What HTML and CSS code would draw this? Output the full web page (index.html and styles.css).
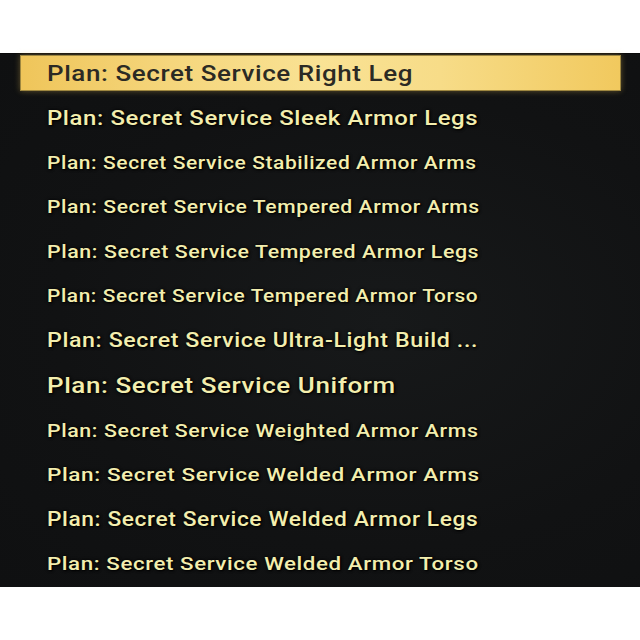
FILE: index.html
```html
<!DOCTYPE html>
<html>
<head>
<meta charset="utf-8">
<link rel="stylesheet" href="styles.css">
</head>
<body>
<div class="panel">
  <ul class="list">
    <li class="row selected fs-220"><span class="label">Plan: Secret Service Right Leg</span></li>
    <li class="row fs-203"><span class="label">Plan: Secret Service Sleek Armor Legs</span></li>
    <li class="row fs-178"><span class="label">Plan: Secret Service Stabilized Armor Arms</span></li>
    <li class="row fs-179"><span class="label">Plan: Secret Service Tempered Armor Arms</span></li>
    <li class="row fs-181"><span class="label">Plan: Secret Service Tempered Armor Legs</span></li>
    <li class="row fs-177"><span class="label">Plan: Secret Service Tempered Armor Torso</span></li>
    <li class="row fs-197"><span class="label">Plan: Secret Service Ultra-Light Build ...</span></li>
    <li class="row fs-220"><span class="label">Plan: Secret Service Uniform</span></li>
    <li class="row fs-181"><span class="label">Plan: Secret Service Weighted Armor Arms</span></li>
    <li class="row fs-191"><span class="label">Plan: Secret Service Welded Armor Arms</span></li>
    <li class="row fs-193"><span class="label">Plan: Secret Service Welded Armor Legs</span></li>
    <li class="row fs-189"><span class="label">Plan: Secret Service Welded Armor Torso</span></li>
  </ul>
</div>
</body>
</html>
```
FILE: styles.css
```css
html, body {
  margin: 0;
  padding: 0;
  background: #ffffff;
}
body {
  padding-top: 53px;
  font-family: Roboto, "Liberation Sans", sans-serif;
}
.panel {
  height: 534px;
  box-sizing: border-box;
  background: radial-gradient(ellipse at 60% 50%, #17191a 0%, #111213 60%, #0f1011 100%);
  border-top: 1px solid #0a0a0a;
  padding: 1px 19px 0 20px;
}
.list {
  list-style: none;
  margin: 0;
  padding: 0;
  display: flex;
  flex-direction: column;
  gap: 8.64px;
}
.row {
  height: 36px;
  box-sizing: border-box;
  display: flex;
  align-items: center;
  padding-left: 26px;
  border: 1px solid transparent;
  color: #f3eeae;
  font-weight: 500;
  letter-spacing: 0.5px;
  white-space: nowrap;
  text-shadow: 1px 1px 2px #000, 0 0 3px #000;
}
.label {
  display: inline-block;
  transform: scaleX(1.18);
  transform-origin: left center;
}
.selected {
  color: #2b2a24;
  text-shadow: none;
  background: linear-gradient(90deg, #efc55a 0%, #f5d67c 25%, #f9e294 50%, #f7dc88 70%, #f1c95e 100%);
  border-color: #9e8740;
  box-shadow: 0 0 6px rgba(240, 200, 90, 0.35);
}
.fs-220 { font-size: 22px; }
.fs-203 { font-size: 20.3px; }
.fs-197 { font-size: 19.7px; }
.fs-193 { font-size: 19.3px; }
.fs-191 { font-size: 19.1px; }
.fs-189 { font-size: 18.9px; }
.fs-181 { font-size: 18.1px; }
.fs-179 { font-size: 17.9px; }
.fs-178 { font-size: 17.8px; }
.fs-177 { font-size: 17.7px; }
```
